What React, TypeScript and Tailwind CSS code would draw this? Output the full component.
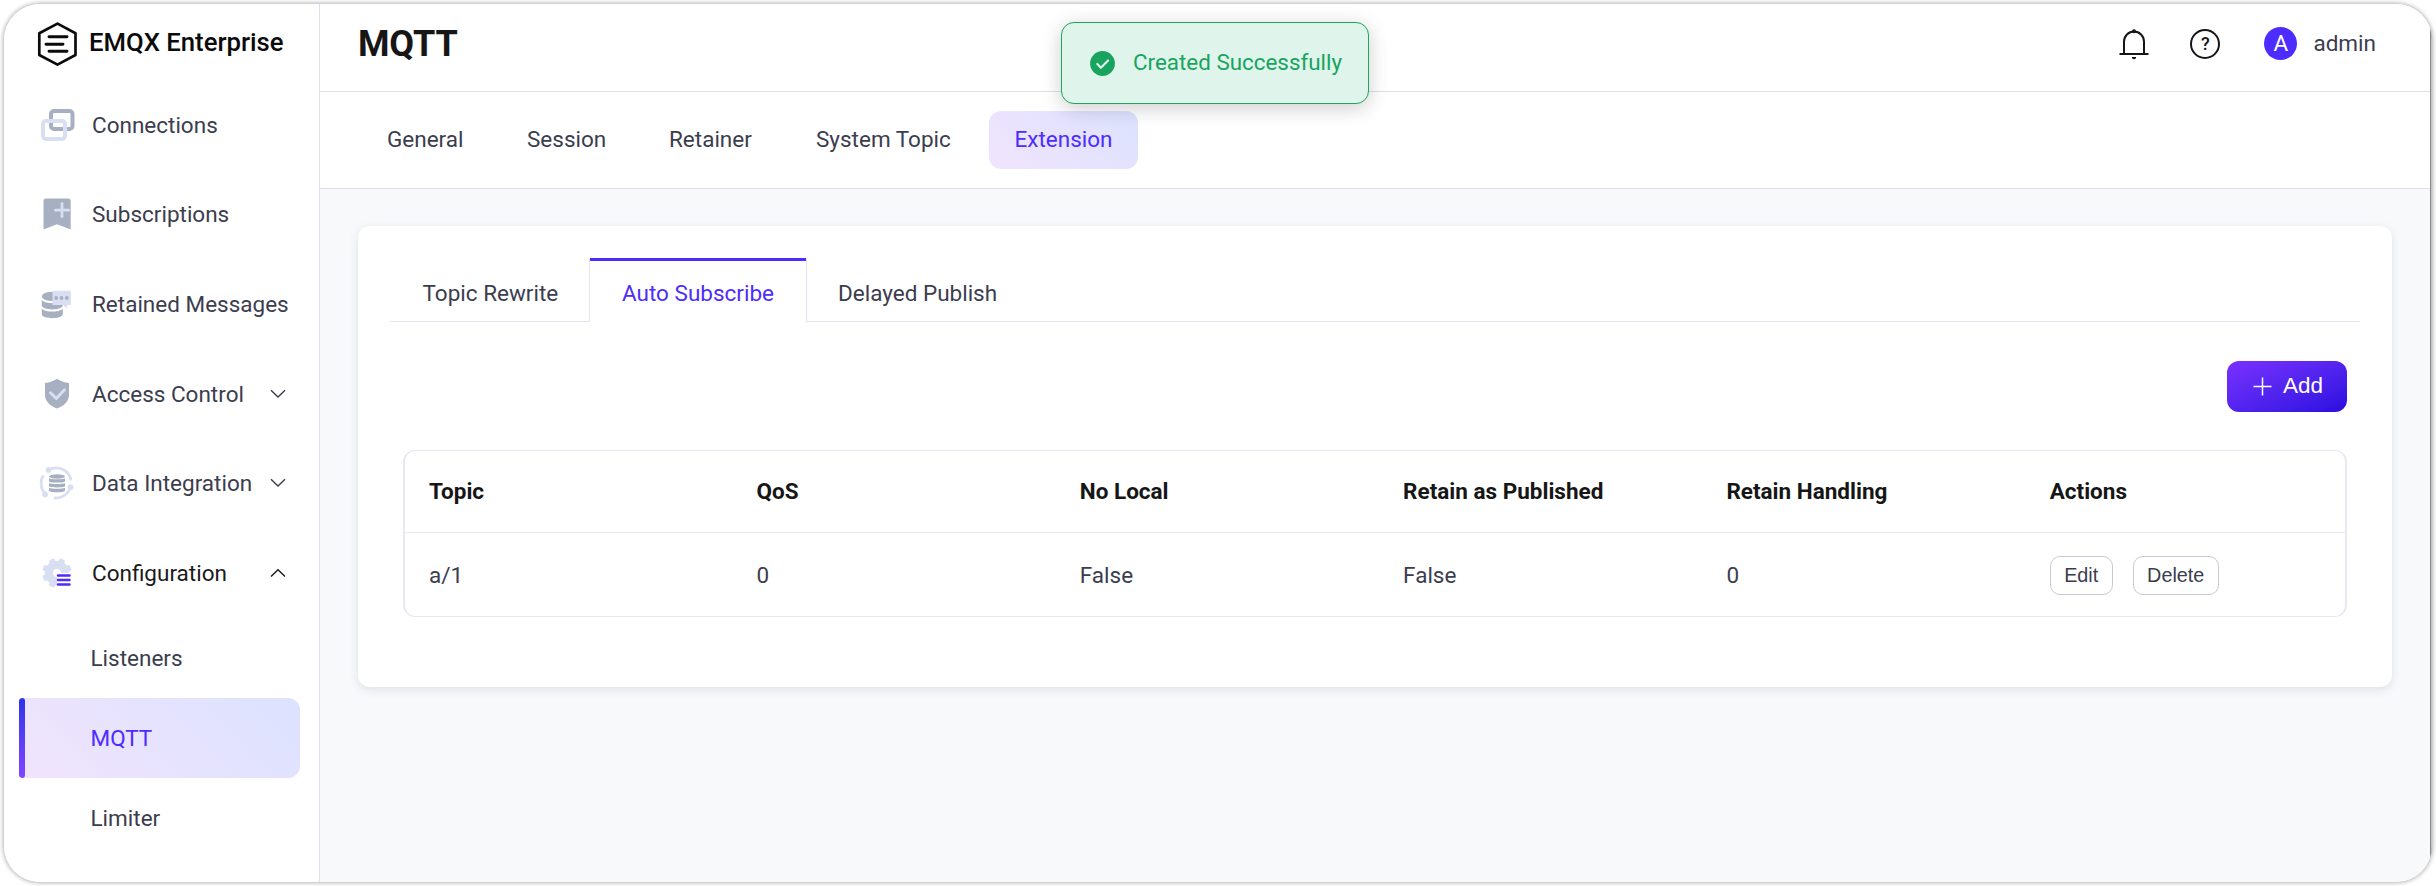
import type { ReactNode } from "react";

const GREY = "#a7b0c0";
const PALE = "#d9dff2";

function ConnectionsIcon() {
  return (
    <svg className="shrink-0" width="36" height="36" viewBox="0 0 36 36" fill="none" strokeWidth="4">
      <rect x="12" y="4" width="21.5" height="18" rx="3" stroke={GREY} />
      <rect x="4" y="14" width="22" height="18" rx="3" stroke={PALE} />
    </svg>
  );
}

function SubscriptionsIcon() {
  return (
    <svg className="shrink-0" width="36" height="36" viewBox="0 0 36 36" fill="none">
      <path d="M7 2.5h22.2a2.5 2.5 0 0 1 2.5 2.5v28.5L18 28.2 4.5 33.5V5A2.5 2.5 0 0 1 7 2.5z" fill={GREY} />
      <path d="M23 7.7v13M16.5 14.2h13" stroke={PALE} strokeWidth="2.8" strokeLinecap="round" />
    </svg>
  );
}

function RetainedIcon() {
  return (
    <svg className="shrink-0" width="36" height="36" viewBox="0 0 36 36" fill="none">
      <ellipse cx="13.3" cy="10.4" rx="10.5" ry="4.7" fill={GREY} />
      <path d="M2.8 14.2c2.2 2 6 2.9 10.5 2.9s8.3-.9 10.5-2.9v5.3c0 2.4-4.7 3.9-10.5 3.9S2.8 21.9 2.8 19.5z" fill={GREY} />
      <path d="M2.8 22.7c2.2 2 6 2.9 10.5 2.9s8.3-.9 10.5-2.9v5.4c0 2.5-4.7 4.2-10.5 4.2S2.8 30.6 2.8 28.1z" fill={GREY} />
      <path d="M14.7 4.7h16a1.2 1.2 0 0 1 1.2 1.2v12a1.2 1.2 0 0 1-1.2 1.2h-2.2L27.2 22.4 24.5 19.1h-9.8a1.2 1.2 0 0 1-1.2-1.2v-12a1.2 1.2 0 0 1 1.2-1.2z" fill={PALE} />
      <circle cx="17.2" cy="12" r="1.9" fill={GREY} />
      <circle cx="22.5" cy="12" r="1.9" fill={GREY} />
      <circle cx="27.8" cy="12" r="1.9" fill={GREY} />
    </svg>
  );
}

function AccessIcon() {
  return (
    <svg className="shrink-0" width="36" height="36" viewBox="0 0 36 36" fill="none">
      <path d="M18 2.8C21 5.200 25.500 6.600 30 6.900V19c0 6.500-5.500 11.300-12 13.400C11.500 30.300 6 25.500 6 19V6.900C10.500 6.600 15 5.200 18 2.800z" fill={GREY} />
      <path d="M11.500 16.800l5.800 5.700 8.200-8.700" stroke={PALE} strokeWidth="3" strokeLinecap="round" strokeLinejoin="round" />
    </svg>
  );
}

function DataIcon() {
  return (
    <svg className="shrink-0" width="36" height="36" viewBox="0 0 36 36" fill="none">
      <g stroke={PALE} strokeWidth="2.7">
        <path d="M9.800 4.900A15 15 0 0 1 32 15.200" />
        <path d="M31.300 22.200A15 15 0 0 1 14.700 32.900" />
        <path d="M6 28.500A15 15 0 0 1 4.300 10.500" />
      </g>
      <g fill={PALE}>
        <circle cx="9.5" cy="4.9" r="2.9" />
        <circle cx="31.5" cy="22.2" r="2.9" />
        <circle cx="6" cy="29.5" r="2.9" />
      </g>
      <g fill={GREY}>
        <ellipse cx="18" cy="11.5" rx="8" ry="2.2" />
        <path d="M10 13.200c2 1.300 14 1.300 16 0v3.200c-1.500 1.600-14.500 1.600-16 0z" />
        <path d="M10 18c2 1.300 14 1.300 16 0v3.200c-1.500 1.600-14.500 1.600-16 0z" />
        <path d="M10 22.800c2 1.300 14 1.300 16 0v2.900c-1.500 2-14.500 2-16 0z" />
      </g>
    </svg>
  );
}

function ConfigIcon() {
  return (
    <svg className="shrink-0" width="36" height="36" viewBox="0 0 36 36" fill="none">
      <circle cx="18" cy="18" r="8.2" stroke={PALE} strokeWidth="8.2" />
      {[22.5, 67.5, 112.5, 157.5, 202.5, 247.5, 292.5, 337.5].map((a) => (
        <rect key={a} x="15" y="3.2" width="6" height="5" rx="1.5" fill={PALE} transform={`rotate(${a} 18 18)`} />
      ))}
      <path d="M18 17.8h15v15H18z" fill="#fff" />
      <path d="M19 20.400h11.500M19 24.900h11.500M19 29.500h11.500" stroke="#4c2cff" strokeWidth="2.5" strokeLinecap="round" />
    </svg>
  );
}

function Chevron({ up = false }: { up?: boolean }) {
  return (
    <svg width="16" height="10" viewBox="0 0 16 10" fill="none" stroke="currentColor" strokeWidth="1.4">
      {up ? <path d="M1 8.500L8 1.700l7 6.800" /> : <path d="M1 1.200L8 8l7-6.800" />}
    </svg>
  );
}

function MenuRow({ icon, label, arrow, active }: { icon: ReactNode; label: string; arrow?: "up" | "down"; active?: boolean }) {
  return (
    <div className={`flex flex-1 items-center pl-[35px] ${active ? "text-[#1a1a1c]" : "text-[#3b3d4e]"}`}>
      {icon}
      <span className="ml-[17px] whitespace-nowrap">{label}</span>
      {arrow && (
        <span className="ml-auto mr-[33px]">
          <Chevron up={arrow === "up"} />
        </span>
      )}
    </div>
  );
}

function Sidebar() {
  return (
    <aside className="flex w-[316px] shrink-0 flex-col border-r border-[#dfdfea] bg-white">
      <div className="flex h-[75.700px] shrink-0 items-center pb-[2px] pl-[33px] pt-[6px]">
        <svg width="42" height="46" viewBox="0 0 42 46" fill="none" stroke="#0b0b0b">
          <path d="M20.500 2.600L38.500 12.200V34L20.500 43.600 2.300 34V12.200z" strokeWidth="2.7" strokeLinejoin="round" />
          <path d="M12 15.700h18M9 23.200h17M12 30.300h18" strokeWidth="2.9" strokeLinecap="round" />
        </svg>
        <span className="ml-[10px] whitespace-nowrap pb-[2px] text-[25.700px] font-medium leading-none text-[#0b0b0b]">
          EMQX Enterprise
        </span>
      </div>
      <nav className="flex h-[538.300px] shrink-0 flex-col">
        <MenuRow icon={<ConnectionsIcon />} label="Connections" />
        <MenuRow icon={<SubscriptionsIcon />} label="Subscriptions" />
        <MenuRow icon={<RetainedIcon />} label="Retained Messages" />
        <MenuRow icon={<AccessIcon />} label="Access Control" arrow="down" />
        <MenuRow icon={<DataIcon />} label="Data Integration" arrow="down" />
        <MenuRow icon={<ConfigIcon />} label="Configuration" arrow="up" active />
      </nav>
      <div className="flex h-[80px] items-center pl-[86.500px] text-[#3b3d4e]">Listeners</div>
      <div className="ml-[15px] mr-[19px] flex h-[80px] overflow-hidden rounded-l-[3px] rounded-r-[12px] bg-linear-45 from-[#f1e4fd] to-[#dce2ff] text-[#4c2cff]">
        <div className="w-[6px] rounded-full bg-linear-to-b from-[#2b33ea] to-[#8044ff]" />
        <div className="flex items-center pl-[65.500px]">MQTT</div>
      </div>
      <div className="flex h-[80px] items-center pl-[86.500px] text-[#3b3d4e]">Limiter</div>
    </aside>
  );
}

function Header() {
  return (
    <header className="flex h-[88px] items-center border-b border-[#dfdfea] bg-white pb-[8px] pl-[38px] pr-[54px]">
      <h1 className="text-[36px] font-bold leading-none tracking-[-0.300px] text-[#161616]">MQTT</h1>
      <div className="ml-auto flex items-center text-[#161616]">
        <svg width="32" height="32" viewBox="0 0 32 32" fill="none" stroke="currentColor" strokeWidth="2">
          <path d="M6 25.500V13.500a10 10 0 0 1 20 0v12" />
          <path d="M1.500 26h29" />
          <circle cx="16" cy="3.2" r="2" fill="currentColor" stroke="none" />
          <path d="M13.800 29h4.400a2.200 2.200 0 0 1-4.400 0z" fill="currentColor" stroke="none" />
        </svg>
        <span className="ml-[40px] flex size-[30px] items-center justify-center rounded-full border-2 border-[#161616] pt-px text-[18px] font-medium leading-none">
          ?
        </span>
        <span className="ml-[44px] flex size-[33px] items-center justify-center rounded-full bg-[#4c2cff] text-[22.500px] leading-none text-white">A</span>
        <span className="ml-[16px] pb-[1px] text-[#3b3d4e]">admin</span>
      </div>
    </header>
  );
}

function TopTabs() {
  return (
    <div className="flex h-[97px] items-center border-b border-[#dfdfea] bg-white pl-[42px] text-[#3b3d4e]">
      <span className="w-[140px] pb-[2px] pl-[25px]">General</span>
      <span className="w-[142px] pb-[2px] pl-[25px]">Session</span>
      <span className="w-[147px] pb-[2px] pl-[25px]">Retainer</span>
      <span className="w-[198px] pb-[2px] pl-[25px]">System Topic</span>
      <span className="flex h-[58px] w-[149px] items-center justify-center rounded-[12px] bg-linear-45 from-[#f1e4fd] to-[#dce2ff] pb-[2px] text-[#4c2cff]">
        Extension
      </span>
    </div>
  );
}

const COLUMNS = ["Topic", "QoS", "No Local", "Retain as Published", "Retain Handling", "Actions"];
const ROW = ["a/1", "0", "False", "False", "0"];

function SubscriptionTable() {
  return (
    <div className="mx-[45px] mt-[38px] h-[167px] rounded-[12px] border border-x-2 border-[#e8e8f3]">
      <div className="grid h-[82px] grid-cols-[327.500px_repeat(4,323.300px)_1fr] items-center border-b border-[#e8e8f3] pb-[1px] font-bold text-[#161616]">
        {COLUMNS.map((c) => (
          <span key={c} className="pl-[24px]">
            {c}
          </span>
        ))}
      </div>
      <div className="grid h-[83px] grid-cols-[327.500px_repeat(4,323.300px)_1fr] items-center text-[#3b3d4e]">
        {ROW.map((c, i) => (
          <span key={i} className="pl-[24px]">
            {c}
          </span>
        ))}
        <div className="flex gap-[20px] pl-[24px] pt-[2px] font-['Liberation_Sans',sans-serif] text-[19.800px] leading-none">
          <span className="flex h-[39px] w-[63px] items-center justify-center rounded-[10px] border border-[#c8cad4]">Edit</span>
          <span className="flex h-[39px] w-[86px] items-center justify-center rounded-[10px] border border-[#c8cad4]">Delete</span>
        </div>
      </div>
    </div>
  );
}

function Card() {
  return (
    <section className="flex h-[461px] flex-col rounded-[12px] bg-white pt-[32px] shadow-[0_3px_10px_rgba(60,60,100,0.13)]">
      <div className="mx-[32px] flex h-[64px] text-[#3b3d4e]">
        <span className="flex w-[199px] items-center border-b border-[#e4e4ef] pl-[32.500px] pt-[6px]">Topic Rewrite</span>
        <span className="flex w-[218px] flex-col border-x border-[#e4e4ef] text-[#4c2cff]">
          <span className="h-[3px] shrink-0 bg-[#4c2cff]" />
          <span className="flex flex-1 items-center justify-center pt-[2px]">Auto Subscribe</span>
        </span>
        <span className="flex flex-1 items-center border-b border-[#e4e4ef] pl-[31px] pt-[6px]">Delayed Publish</span>
      </div>
      <div className="mr-[45px] mt-[39px] flex h-[51px] w-[120px] items-center self-end rounded-[12px] bg-linear-to-br from-[#7a30ff] to-[#2b0bdf] pl-[26px] text-white">
        <svg width="19" height="19" viewBox="0 0 19 19" stroke="#fff" strokeWidth="1.5" fill="none">
          <path d="M9.500 0.500v18M0.500 9.500h18" />
        </svg>
        <span className="ml-[11px] pb-[2px] font-['Liberation_Sans',sans-serif]">Add</span>
      </div>
      <SubscriptionTable />
    </section>
  );
}

function Toast() {
  return (
    <div className="absolute left-[1061px] top-[22px] flex h-[82px] w-[308px] items-center rounded-[13px] border border-[#1ba463] bg-[#dff5ec] pl-[28px] text-[#18a45f] shadow-[0_4px_20px_rgba(0,0,0,0.2)]">
      <svg width="25" height="25" viewBox="0 0 25 25" fill="none">
        <circle cx="12.5" cy="12.5" r="12.4" fill="#18a45f" />
        <path d="M7.200 12.900l3.700 3.900 7.200-7.400" stroke="#dff5ec" strokeWidth="2.1" strokeLinecap="round" strokeLinejoin="round" />
      </svg>
      <span className="ml-[18px] whitespace-nowrap pb-[2px] text-[22.400px]">Created Successfully</span>
    </div>
  );
}

export default function App() {
  return (
    <div className="relative h-[886px] w-[2436px] overflow-hidden bg-white p-[4px] font-['Roboto',sans-serif] text-[22.500px] leading-[28px]">
      <div className="flex h-[878px] w-[2428px] overflow-hidden rounded-[36px] bg-white shadow-[0_0_4px_1px_rgba(0,0,0,0.3)]">
        <Sidebar />
        <main className="flex flex-1 flex-col bg-[#f7f9fb]">
          <Header />
          <TopTabs />
          <div className="px-[38px] pt-[37px]">
            <Card />
          </div>
        </main>
        <div className="mb-[25px] mt-[25px] w-[2px] shrink-0 border-r border-[#c4c4c4] bg-[#8a8a8a]" />
      </div>
      <Toast />
    </div>
  );
}
